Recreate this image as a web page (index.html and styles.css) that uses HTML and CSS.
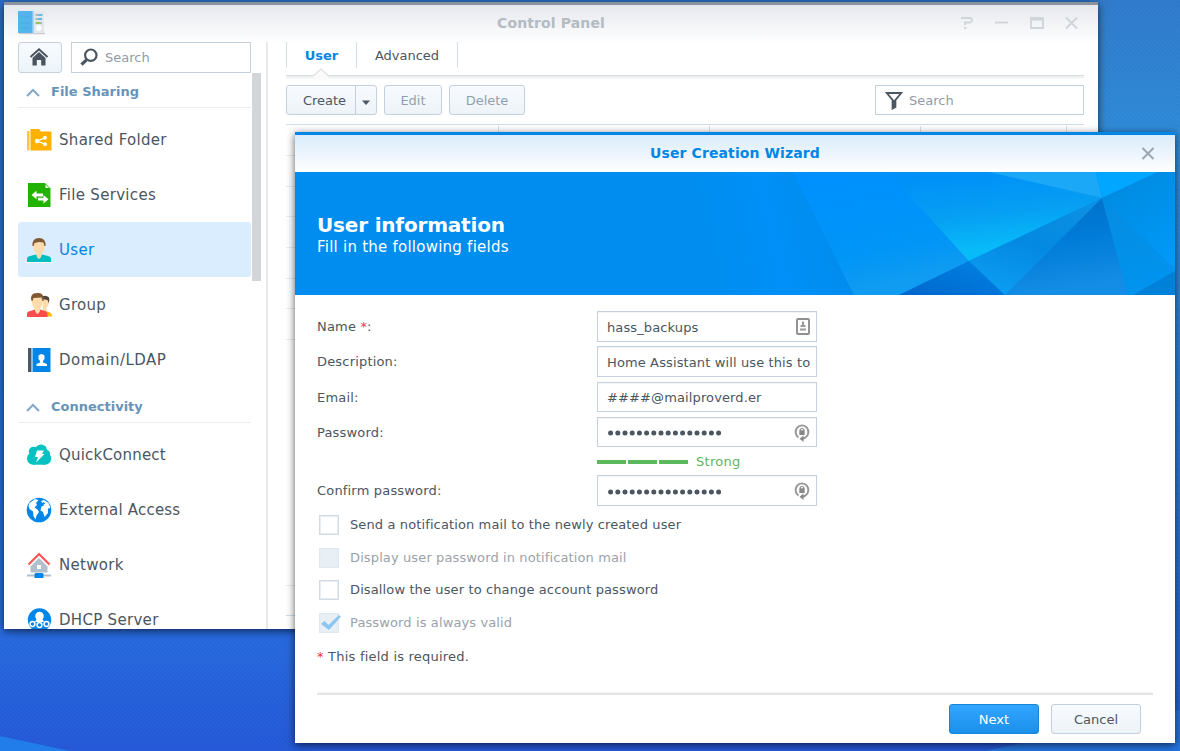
FILE: index.html
```html
<!DOCTYPE html>
<html lang="en">
<head>
<meta charset="utf-8">
<title>Control Panel</title>
<link rel="stylesheet" href="styles.css">
</head>
<body>
<div class="desktop">
  <svg class="wallpaper" width="1180" height="751" viewBox="0 0 1180 751" aria-hidden="true">
    <defs>
      <linearGradient id="wl" x1="0" y1="0" x2="0" y2="1">
        <stop offset="0" stop-color="#2a6cc4"/><stop offset=".84" stop-color="#2669dd"/><stop offset="1" stop-color="#2357d6"/>
      </linearGradient>
      <linearGradient id="wr" x1="0" y1="0" x2="0" y2="1">
        <stop offset="0" stop-color="#2f79ca"/><stop offset=".2" stop-color="#2d8bd7"/><stop offset=".6" stop-color="#2878d8"/><stop offset="1" stop-color="#1f5fd2"/>
      </linearGradient>
      <pattern id="weave" width="4" height="4" patternUnits="userSpaceOnUse"><path d="M0 4L4 0" stroke="#fff" stroke-opacity=".03"/></pattern>
    </defs>
    <rect width="1180" height="751" fill="url(#wl)"/>
    <rect x="1090" width="90" height="742" fill="url(#wr)"/>
    <path d="M0 736L70 751H0z" fill="#1f7ce9"/>
    <path d="M985 751L1180 710V751z" fill="#2273de"/>
    <rect width="1180" height="751" fill="url(#weave)"/>
  </svg>

  <section class="window panel">
    <header class="panel-title">
      <svg class="app-icon" width="28" height="24" viewBox="0 0 28 24">
        <path d="M1 22.5H27" stroke="#9aa2aa" stroke-width="1.4" opacity=".5"/>
        <path d="M14 1H26V22H14z" fill="#e3e7ea"/>
        <path d="M0 0H15V22H0z" fill="#54b4ed"/><path d="M15 0V22" stroke="#93d2f6" stroke-width="1.5"/>
        <path d="M2 6H12M2 12H12M2 17H12" stroke="#49abe6"/>
        <path d="M17.500 4H24M17.500 8H24M17.500 12H24" stroke="#7d858c" stroke-width="1.200"/>
        <path d="M21 4H24.500M20 8H24" stroke="#45c0f2" stroke-width="1.600"/><path d="M18 12H22" stroke="#86cd3f" stroke-width="1.600"/>
        <circle cx="20.800" cy="17" r="2.700" fill="#fff"/>
      </svg>
      <h1 class="panel-name">Control Panel</h1>
      <svg class="controls" width="119" height="14" viewBox="0 0 119 14" fill="none" stroke="#d0d5da" stroke-width="1.900">
        <path d="M1 2H10Q12 2 12 4T10 6.500H5V9"/><path d="M4 12H6.500"/>
        <path d="M35 6.500H48"/><path d="M71 2H83V12H71zM71 3.500H83"/>
        <path d="M106 1.500L117 12.500M117 1.500L106 12.500"/>
      </svg>
    </header>
    <div class="panel-body">
      <nav class="sidebar">
        <div class="side-tools">
          <button class="home" aria-label="Home"><svg width="20" height="20" viewBox="0 0 20 20"><path d="M1.500 10L10 2.300L18.500 10" fill="none" stroke="#4a545e" stroke-width="2"/><path d="M10 5L16.500 11V18.500H12.200V13H7.800V18.500H3.500V11z" fill="#4a545e"/></svg></button>
          <div class="search"><svg width="18" height="18" viewBox="0 0 18 18" fill="none" stroke="#4b5661"><circle cx="10.800" cy="7.200" r="5.700" stroke-width="2.200"/><path d="M6.500 11.800L1.500 16.700" stroke-width="3.200"/></svg><span class="drop">Search</span></div>
        </div>
        <div class="side-scroll">
          <div class="side-list">
            <h2 class="group-head"><svg width="14" height="9" viewBox="0 0 14 9"><path d="M1 8L7 2L13 8" fill="none" stroke="#84a9c6" stroke-width="2"/></svg><span>File Sharing</span></h2>
            <div class="items">
              <a class="item"><svg width="26" height="26" viewBox="0 0 26 26"><path d="M1 4H3.500V23.500H1z" fill="#ffc53d"/><path d="M4.500 2H13L15 4.500H25.500V23.500H4.500z" fill="#ffb100"/><g fill="#fff"><circle cx="11" cy="14" r="2.200"/><circle cx="19" cy="10.800" r="2"/><circle cx="19" cy="17.200" r="2"/></g><path d="M19 10.800L11 14L19 17.200" fill="none" stroke="#fff" stroke-width="1.300"/></svg><span>Shared Folder</span></a>
              <a class="item"><svg width="26" height="26" viewBox="0 0 26 26"><path d="M2 1H19L24.500 6.500V25H2z" fill="#22b300"/><path d="M19.500 2.500V6H23z" fill="#fff"/><path d="M5.500 13L10.500 8.800V11.600H17V14.400H10.500V17.200zM22.500 17.200L17.500 13V15.800H12V18.600H17.500V21.400z" fill="#fff"/></svg><span>File Services</span></a>
              <a class="item active"><svg width="26" height="26" viewBox="0 0 26 26"><path d="M1 25V22Q1 19.500 4 19L10 17.500H16L22 19Q25 19.500 25 22V25z" fill="#00bdc1"/><path d="M0 25.500H26" stroke="#fff"/><path d="M7.500 5Q13 0 18.500 5V10Q18.500 14 15.500 16.500V19Q13 25 10.500 19V16.500Q7.500 14 7.500 10z" fill="#ffdbaa"/><path d="M6.500 9Q6 1 13 1T19.500 9L18.300 9L17.500 5.500L13 5L8.500 6L7.700 9z" fill="#805833"/></svg><span>User</span></a>
              <a class="item"><svg width="26" height="26" viewBox="0 0 26 26"><path d="M17 18L24 20.500Q26 21.500 26 24.500H20z" fill="#ffb400"/><path d="M16 5H23V12L20.500 16V20L17 18z" fill="#ffdbaa"/><path d="M16 4.500Q20 2.500 23 5.500Q24 7.500 22.500 11L21.500 8L16 7z" fill="#51463d"/><path d="M1 25V22Q1 19.500 4 19L9 17.500H14L19 19Q21.500 19.500 21.500 22V25z" fill="#fb4d4d"/><path d="M6 5Q11 0 16.500 5V10Q16.500 14 14 16.500V19Q11.500 25 9 19V16.500Q6 14 6 10z" fill="#ffdbaa"/><path d="M5.500 9Q3.500 1 11 1Q18.500 0 17.500 9L16.500 9L15.500 5.500L7.500 6L6.500 9z" fill="#805833"/></svg><span>Group</span></a>
              <a class="item"><svg width="26" height="26" viewBox="0 0 26 26"><path d="M2 1H5.500V25H2z" fill="#4b5867"/><path d="M6.500 1H24.500V25H6.500z" fill="#0086e9"/><path d="M12.500 8.500Q15.500 5.500 18.500 8.500V12L17 14V15.500L21 17V19H10.500V17L14 15.500V14L12.500 12z" fill="#fff"/></svg><span class="wide">Domain/LDAP</span></a>
            </div>
            <h2 class="group-head"><svg width="14" height="9" viewBox="0 0 14 9"><path d="M1 8L7 2L13 8" fill="none" stroke="#84a9c6" stroke-width="2"/></svg><span>Connectivity</span></h2>
            <div class="items">
              <a class="item"><svg width="26" height="26" viewBox="0 0 26 26"><g fill="#05c1c1"><circle cx="7.200" cy="16.500" r="6.200"/><circle cx="19" cy="16.500" r="6.200"/><circle cx="15" cy="8.500" r="6"/><circle cx="7.500" cy="9.500" r="4.700"/><circle cx="20" cy="12" r="4"/><path d="M7 9H19V22.700H7z"/></g><path d="M11 8.500H18L16 12H18.500L10 20.500L12 15H9z" fill="#fff"/></svg><span class="snug">QuickConnect</span></a>
              <a class="item"><svg width="26" height="26" viewBox="0 0 26 26"><circle cx="13" cy="13" r="12.300" fill="#0086e9"/><path d="M3.500 6L9 2L12.500 3L10 6L11 8L8.500 10.500L11.500 12.500L13 15L10.500 18.500L9.500 22.500L7.500 19L7 14.500L3.500 12L2.500 9zM15 4L18 3L22.500 6L24.500 11L22 11.500V16L18.500 20L17 15L14.500 13.500L15.500 9.500L18 8.500z" fill="#fff"/><path d="M15.500 6.500L18 5L19 7L16 8z" fill="#0086e9"/></svg><span class="snug">External Access</span></a>
              <a class="item"><svg width="26" height="26" viewBox="0 0 26 26"><path d="M2.500 12.500L13 2L23.500 12.500" fill="none" stroke="#ff5656" stroke-width="2.200"/><path d="M13 6L21.500 14.500V20.500H4.500V14.500z" fill="#b1bfcc"/><path d="M11 13H15V17H11z" fill="#fff"/><path d="M1 23.500H25" stroke="#b1bfcc" stroke-width="2"/><path d="M9.500 21H16.500L17.500 22V26H8.500V22z" fill="#0086e9"/></svg><span>Network</span></a>
              <a class="item"><svg width="26" height="26" viewBox="0 0 26 26"><circle cx="13.500" cy="13" r="11.700" fill="#0086e9"/><circle cx="13.500" cy="9" r="4.300" fill="#fff"/><path d="M10.500 12H16.500L18 15H9z" fill="#fff"/><g fill="#0086e9" stroke="#fff" stroke-width="1.500"><circle cx="6.500" cy="17" r="2.400"/><circle cx="13.500" cy="18" r="2.400"/><circle cx="20.500" cy="17" r="2.400"/></g></svg><span>DHCP Server</span></a>
            </div>
          </div>
          <div class="scrollbar"></div>
        </div>
      </nav>
      <main class="main">
        <div class="tabs"><span class="tab current">User</span><span class="tab">Advanced</span></div>
        <svg class="tab-rule" width="798" height="12" viewBox="0 0 798 12"><path d="M0 9H798" stroke="#f0f1f2" stroke-width="3"/><path d="M0 7.500H28L35 1L42 7.500H798" fill="none" stroke="#d9dcde" stroke-width="1.200"/><path d="M28 8.500L35 2L42 8.500V12H28z" fill="#fafafa"/></svg>
        <div class="toolbar">
          <button class="btn create"><span class="label">Create</span><span class="arrow"><svg width="8" height="5" viewBox="0 0 8 5"><path d="M0 .500H8L4 5z" fill="#4b5661"/></svg></span></button>
          <button class="btn edit off">Edit</button>
          <button class="btn del off">Delete</button>
          <div class="filter"><svg width="18" height="19" viewBox="0 0 18 19"><path d="M1.800 2H16.200L10.400 9V16L7.600 17.500V9z" fill="none" stroke="#4b5661" stroke-width="1.900"/><path d="M8 9H10V17H8z" fill="#4b5661"/></svg><span class="drop">Search</span></div>
        </div>
        <div class="grid">
          <div class="grid-head"><i></i><i></i><i></i><i></i></div>
          <div class="rows"><i></i><i></i><i></i><i></i><i></i><i></i><i></i></div>
          <div class="grid-foot"></div>
        </div>
      </main>
    </div>
  </section>

  <section class="window wizard">
    <header class="wizard-title"><h1>User Creation Wizard</h1><svg class="close" width="14" height="13" viewBox="0 0 14 13"><path d="M1.500 1L12.500 12M12.500 1L1.500 12" stroke="#9ba8b2" stroke-width="2.100"/></svg></header>
    <div class="banner">
      <svg class="facets" width="475" height="123" viewBox="0 0 475 123">
        <defs>
          <linearGradient id="b0" x1="0" y1=".2" x2="1" y2="0"><stop offset="0" stop-color="#008df0"/><stop offset=".4" stop-color="#0090f7"/><stop offset=".8" stop-color="#008cee"/><stop offset="1" stop-color="#008eef"/></linearGradient>
          <linearGradient id="b1" x1="0" y1="0" x2=".3" y2="1"><stop offset="0" stop-color="#0090ff"/><stop offset=".7" stop-color="#0095f7"/><stop offset="1" stop-color="#109cf1"/></linearGradient>
          <linearGradient id="b2" x1=".35" y1="0" x2=".58" y2="1"><stop offset="0" stop-color="#0090f8"/><stop offset=".45" stop-color="#069ef3"/><stop offset=".85" stop-color="#08bbf8"/></linearGradient>
          <linearGradient id="b3" x1="0" y1="1" x2="1" y2="0"><stop offset="0" stop-color="#0066cd"/><stop offset="1" stop-color="#0084e4"/></linearGradient>
          <linearGradient id="b4" x1=".7" y1="0" x2=".3" y2="1"><stop offset="0" stop-color="#0b90e3"/><stop offset=".5" stop-color="#0489e2"/><stop offset="1" stop-color="#0b9df1"/></linearGradient>
          <linearGradient id="b5" x1="0" y1="0" x2=".2" y2="1"><stop offset="0" stop-color="#006fc8"/><stop offset=".5" stop-color="#007bd7"/><stop offset="1" stop-color="#138de5"/></linearGradient>
          <linearGradient id="b6" x1="0" y1="0" x2=".2" y2="1"><stop offset="0" stop-color="#078be1"/><stop offset="1" stop-color="#0094ee"/></linearGradient>
          <linearGradient id="b7" x1=".3" y1="0" x2=".8" y2="1"><stop offset="0" stop-color="#008ae0"/><stop offset="1" stop-color="#009af7"/></linearGradient>
        </defs>
        <path d="M0 0H100L154 123H0z" fill="url(#b0)"/>
        <path d="M93 0H190L270 89L199 123H154z" fill="url(#b1)"/>
        <path d="M188 0H290L402 26L269 89z" fill="url(#b2)"/>
        <path d="M289 0H396L402 26z" fill="#1ba8f6"/><path d="M396 0H458L402 26z" fill="#00a6ff"/>
        <path d="M199 123L269 89L305 123z" fill="url(#b3)"/><path d="M269 89L402 26L305 123z" fill="url(#b4)"/>
        <path d="M305 123L402 26L428 123z" fill="url(#b5)"/><path d="M402 26L475 97V99L433 123H428z" fill="url(#b6)"/>
        <path d="M402 26L458 0H475V97z" fill="url(#b7)"/><path d="M433 123L475 99V123z" fill="#0081d9"/>
      </svg>
      <div class="banner-text"><h2>User information</h2><p>Fill in the following fields</p></div>
    </div>
    <div class="form">
      <div class="field tall"><label>Name <em>*</em>:</label><div class="input"><span>hass_backups</span><svg width="14" height="17" viewBox="0 0 14 17"><rect x="1" y="1" width="12" height="15" rx="1" fill="none" stroke="#8f8f8f" stroke-width="1.900"/><path d="M6 3.500H8V7H9.500V9H4.500V7H6zM4 10.500H10V12.500H4z" fill="#999"/></svg></div></div>
      <div class="field tall"><label>Description:</label><div class="input"><span>Home Assistant will use this to</span></div></div>
      <div class="field"><label>Email:</label><div class="input"><span class="mail">####@mailproverd.er</span></div></div>
      <div class="field"><label>Password:</label><div class="input"><svg class="dots" width="116" height="6" viewBox="0 0 116 6" role="img" aria-label="Hidden password"><path d="M3.600 3H115" stroke="#4b5661" stroke-width="5" stroke-linecap="round" stroke-dasharray="0 7.200"/></svg><svg width="16" height="19" viewBox="0 0 16 19"><path d="M4.500 14.500A6.400 6.600 0 1 1 11.500 14.500Q10.500 15.500 8 15.700" fill="none" stroke="#969696" stroke-width="1.900"/><path d="M9.500 12.500V19L5.500 15.800z" fill="#888"/><path d="M5.300 7.300H10.700V12H5.300z" fill="#888"/><path d="M6.300 8V6.500Q8 4 9.700 6.500V8" fill="none" stroke="#888" stroke-width="1.200"/></svg></div></div>
      <div class="strength"><i></i><i></i><i></i><span>Strong</span></div>
      <div class="field tall confirm"><label>Confirm password:</label><div class="input"><svg class="dots" width="116" height="6" viewBox="0 0 116 6" role="img" aria-label="Hidden password"><path d="M3.600 3H115" stroke="#4b5661" stroke-width="5" stroke-linecap="round" stroke-dasharray="0 7.200"/></svg><svg width="16" height="19" viewBox="0 0 16 19"><path d="M4.500 14.500A6.400 6.600 0 1 1 11.500 14.500Q10.500 15.500 8 15.700" fill="none" stroke="#969696" stroke-width="1.900"/><path d="M9.500 12.500V19L5.500 15.800z" fill="#888"/><path d="M5.300 7.300H10.700V12H5.300z" fill="#888"/><path d="M6.300 8V6.500Q8 4 9.700 6.500V8" fill="none" stroke="#888" stroke-width="1.200"/></svg></div></div>
      <div class="checks">
        <div class="check"><i class="box"></i><span>Send a notification mail to the newly created user</span></div>
        <div class="check off"><i class="box"></i><span>Display user password in notification mail</span></div>
        <div class="check"><i class="box"></i><span>Disallow the user to change account password</span></div>
        <div class="check off"><i class="box"><svg width="22" height="20" viewBox="0 0 22 20"><path d="M2 11L5.500 8L9.500 12L20 2L22 3.500L10 17z" fill="#8ac6f0"/></svg></i><span>Password is always valid</span></div>
      </div>
      <p class="note"><em>*</em> This field is required.</p>
    </div>
    <footer class="actions"><button class="btn next">Next</button><button class="btn cancel">Cancel</button></footer>
  </section>
</div>
</body>
</html>
```
FILE: styles.css
```css
* { box-sizing: border-box; }
body, h1, h2, p { margin: 0; }
body { width: 1180px; height: 751px; overflow: hidden; font: 13px/18px Verdana, "DejaVu Sans", sans-serif; color: #4b5661; }
h1, h2 { font-size: 13px; line-height: 18px; font-weight: bold; }
h1 { font-size: 14px; }
span, h1, h2, p, label { white-space: nowrap; }
svg { display: block; flex: none; }
em { color: #f5324b; font-style: normal; }
button { font: inherit; color: inherit; padding: 0; }
.desktop { position: relative; width: 1180px; height: 751px; overflow: hidden; }
.wallpaper { position: absolute; inset: 0; }
.window { position: absolute; background: #fff; display: flex; flex-direction: column; }
.drop { padding-top: 2px; }

.panel { left: 4px; top: 2px; width: 1094px; height: 627px; border-top: 3px solid #8b929d; box-shadow: 0 2px 8px rgba(0,0,0,.65); background: linear-gradient(#e5e8ee, #fff 38px); overflow: hidden; }
.panel-title { height: 37px; display: flex; justify-content: space-between; padding: 5px 19px 0 14px; }
.app-icon { margin-top: 1px; }
.panel-name { color: #b4bbc2; padding-top: 4px; margin-left: 96px; letter-spacing: .12px; }
.controls { margin-top: 6px; }
.panel-body { flex: 1; min-height: 0; display: flex; }
.sidebar { width: 264px; padding-left: 14px; border-right: 2px solid #e6e8ea; display: flex; flex-direction: column; }
.side-tools { display: flex; gap: 9px; height: 31px; flex: none; }
.home { width: 44px; height: 31px; border: 1px solid #c5d1dd; border-radius: 3px; background: linear-gradient(#f7fbff, #edf4f9); display: flex; justify-content: center; align-items: center; }
.home svg { margin: 0 2px 1px 0; }
.search, .filter { display: flex; align-items: center; color: #929ba6; border: 1px solid #c3d0de; background: #fff; }
.search { width: 180px; padding: 0 0 1px 8px; gap: 7px; }
.side-scroll { display: flex; flex: 1; min-height: 0; overflow: hidden; gap: 1px; }
.side-list { width: 233px; }
.scrollbar { width: 9px; height: 208px; background: #d3d5d8; }
.group-head { height: 35px; display: flex; align-items: center; gap: 11px; padding-left: 8px; border-bottom: 1px solid #ebedef; margin-bottom: 4px; color: #6694b9; }
.group-head svg { margin-top: 5px; }
.group-head span { margin-top: 3px; }
.items { margin-bottom: 1px; }
.item { height: 55px; padding-left: 8px; display: flex; align-items: center; gap: 7px; font-size: 15px; letter-spacing: .3px; border-radius: 3px; }
.item.active { background: #d9edff; color: #0086e5; }
.snug { letter-spacing: .2px; }
.wide { letter-spacing: .45px; }

.main { flex: 1; padding: 0 14px 0 18px; display: flex; flex-direction: column; }
.tabs { display: flex; height: 26px; flex: none; }
.tab { border-right: 1px solid #d2dfeb; width: 101px; display: flex; justify-content: center; align-items: center; padding-top: 2px; }
.tab.current { width: 71px; border-left: 1px solid #d2dfeb; color: #0086e5; font-weight: bold; }
.tab-rule { margin-bottom: 5px; }
.toolbar { display: flex; height: 30px; flex: none; }
.btn { height: 30px; border: 1px solid #c3d0de; border-radius: 3px; background: linear-gradient(#f7fbff, #eef3f7); display: flex; justify-content: center; align-items: center; padding-top: 2px; }
.create { width: 91px; justify-content: flex-start; padding-top: 0; }
.create .label { width: 68px; padding: 2px 0 0 7px; text-align: center; }
.arrow { height: 28px; border-left: 1px solid #c3d0de; width: 21px; display: grid; place-items: center; padding-top: 5px; }
.edit { width: 58px; margin-left: 7px; }
.del { width: 76px; margin-left: 7px; }
.btn.off { color: #929fac; }
.filter { width: 209px; margin-left: auto; padding-left: 9px; gap: 6px; }
.grid { margin-top: 9px; flex: 1; border-top: 1px solid #d2dfeb; display: flex; flex-direction: column; }
.grid-head { height: 30px; display: flex; padding-top: 1px; }
.grid-head i { border-right: 1px solid #d2dfeb; width: 211px; }
.grid-head i:first-child { width: 213px; }
.grid-head i:last-child { width: 146px; }
.rows { flex: 1; }
.rows i { display: block; height: 30.7px; border-top: 1px solid #e9edf1; }
.grid-foot { height: 31px; margin-bottom: 13px; border-top: 1px solid #e9edf1; border-bottom: 1px solid #d2dfeb; }

.wizard { left: 295px; top: 132px; width: 880px; height: 611px; border-top: 3px solid #0086e5; box-shadow: 0 2px 8px rgba(0,0,0,.65); }
.wizard-title { height: 37px; flex: none; background: linear-gradient(#d9ebfa, #fff); display: flex; align-items: center; color: #0086e5; padding: 0 20px 1px 34px; }
.wizard-title h1 { flex: 1; text-align: center; letter-spacing: .1px; }
.banner { height: 123px; flex: none; background: #008df0; display: grid; overflow: hidden; }
.facets, .banner-text { grid-area: 1 / 1; }
.facets { justify-self: end; }
.banner-text { color: #fff; padding: 41px 22px; }
.banner-text h2 { font-size: 20px; line-height: 24px; letter-spacing: -.18px; }
.banner-text p { font-size: 15px; line-height: 19px; letter-spacing: .24px; padding-top: 1px; }
.form { padding: 16px 22px 0; flex: 1; letter-spacing: .12px; }
.field { display: flex; height: 30px; margin-bottom: 5px; }
.field.tall { height: 31px; margin-bottom: 4px; }
.field.tall + .field:not(.tall) { margin-top: 5px; }
.field label { width: 280px; line-height: 31px; letter-spacing: .18px; }
.input { width: 220px; height: 100%; border: 1px solid #c3d0de; box-shadow: inset 0 1px #f2f4f6; padding: 2px 6px 0 9px; display: flex; align-items: center; justify-content: space-between; overflow: hidden; }
.input > svg:last-child { margin-top: -2px; }
.mail { letter-spacing: .12px; }
.strength { margin: -5px 0 4px; height: 29px; padding: 0 0 0 280px; display: flex; align-items: center; gap: 2px; color: #5cb85c; }
.strength i { width: 29px; height: 4px; background: #5cb85c; }
.strength span { margin-left: 6px; letter-spacing: .3px; }
.confirm { margin-top: -5px; }
.checks { display: grid; grid-auto-rows: 32.6px; margin-top: -4px; padding: 0 0 0 2px; }
.field.confirm { margin-bottom: 7px; }
.check { display: flex; align-items: center; gap: 11px; }
.box { width: 20px; height: 20px; border: 1px solid #d0dbe5; box-shadow: inset 0 0 0 1px #e6edf3; background: #fff; }
.check.off { color: #9aa2ab; }
.off .box { border-color: #dfe8f0; background: #e9f0f5; }
.box svg { margin: -1px; }
.note { margin-top: 9px; letter-spacing: .22px; }
.actions { margin: 0 22px; height: 50px; flex: none; border-top: 2px solid #e2e4e6; box-shadow: 0 -2px 2px -1px #f1f1f1; padding: 9px 12px 0 0; display: flex; justify-content: flex-end; gap: 12px; }
.next, .cancel { width: 90px; }
.next { color: #fff; background: linear-gradient(#31a5ff, #1b90ea); border-color: #1685d8; }
.cancel { color: #4b5661; }
```
